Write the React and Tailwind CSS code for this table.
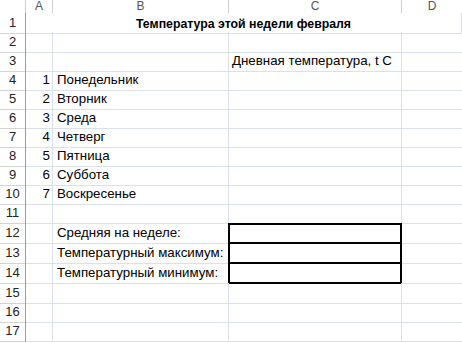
import React from "react";

const COLS = "grid grid-cols-[26px_27px_176px_173px_60px]";
const HEIGHTS = [19, 19, 19, 19, 19, 19, 19, 19, 19, 19, 20, 20, 20, 20, 19, 19, 19];

const DAYS = ["Понедельник", "Вторник", "Среда", "Четверг", "Пятница", "Суббота", "Воскресенье"];
const SUMMARY = { 12: "Средняя на неделе:", 13: "Температурный максимум:", 14: "Температурный минимум:" };

// thick black box around C12:C14
const boxClass = {
  12: "border-l-2 border-r-2 border-t-2 border-b-2 border-black -ml-px",
  13: "border-l-2 border-r-2 border-b-2 border-black -ml-px",
  14: "border-l-2 border-r-2 border-b-2 border-black -ml-px",
};

function Cell({ className = "", children }) {
  return (
    <div className={`flex items-center overflow-hidden whitespace-nowrap border-r border-b border-[#dae1ec] ${className}`}>
      {children}
    </div>
  );
}

function RowHead({ n }) {
  return (
    <div className="flex items-center justify-center border-r border-b border-r-[#9c9c9c] border-b-[#d4d4d4] text-[13px] text-[#222]">
      {n}
    </div>
  );
}

export default function App() {
  return (
    <div className="w-[462px] h-[343px] overflow-hidden bg-white text-[13.3px] text-black" style={{ fontFamily: '"Liberation Sans", Arial, sans-serif' }}>
      {/* column headers, top clipped by the window */}
      <div className={`${COLS} h-[13px] overflow-hidden text-[12px] text-[#555]`}>
        {["", "A", "B", "C", "D"].map((l, i) => (
          <div
            key={i}
            className={`flex justify-center items-end border-b border-[#a8a8a8] ${i < 4 ? "border-r border-r-[#cfcfcf]" : ""} ${i === 0 ? "border-r-[#9c9c9c]" : ""}`}
          >
            <span className="leading-none pb-[6px]">{l}</span>
          </div>
        ))}
      </div>

      {HEIGHTS.map((h, idx) => {
        const r = idx + 1;
        const day = r >= 4 && r <= 10 ? DAYS[r - 4] : null;
        return (
          <div key={r} className={COLS} style={{ height: h }}>
            <RowHead n={r} />
            {r === 1 ? (
              <Cell className="col-span-4 justify-center font-bold text-[12.3px] pt-[2px]">
                Температура этой недели февраля
              </Cell>
            ) : (
              <>
                <Cell className="justify-end pr-[2px]">{day ? r - 3 : ""}</Cell>
                <Cell className="pl-[4px]">{day || SUMMARY[r] || ""}</Cell>
                <Cell className={`pl-[3px] ${boxClass[r] || ""}`}>
                  {r === 3 ? "Дневная температура, t C" : ""}
                </Cell>
                <Cell className="border-r-0">{""}</Cell>
              </>
            )}
          </div>
        );
      })}
    </div>
  );
}
